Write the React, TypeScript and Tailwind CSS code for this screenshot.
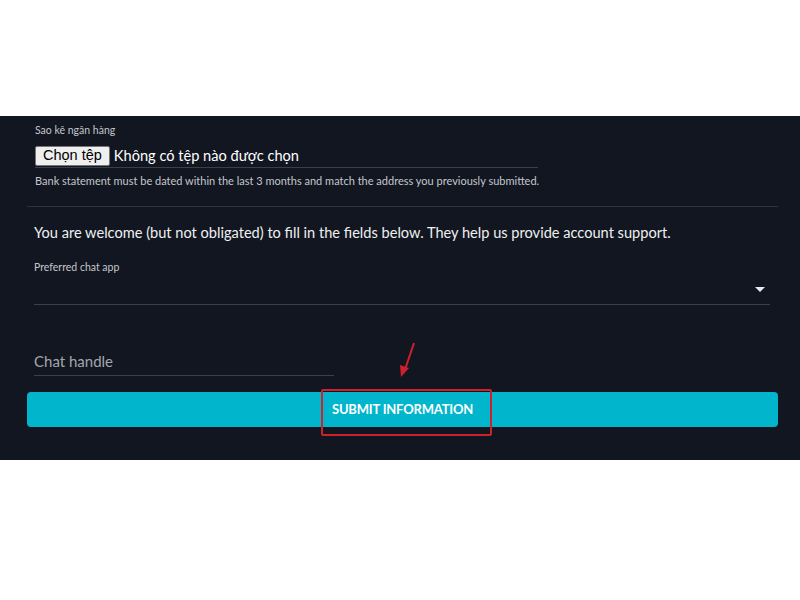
export default function App() {
  return (
    <div className="w-[800px] h-[600px] bg-white font-['Lato','Noto_Sans',sans-serif]">
      <div className="h-[116px]" />
      <div className="relative h-[344px] bg-[#121620] pl-[27px] pr-[22px] pt-[8px]">
        <div className="pl-[8px] w-[511px]">
          <div className="text-[10.5px] leading-[12px] text-[#c4c7cd]">Sao kê ngân hàng</div>
          <div className="mt-[9px] flex items-center gap-[4px] border-b border-[#3a3f49]">
            <span className="px-[7px] h-[20px] flex items-center bg-[#efefef] border border-[#767676] rounded-[2px] text-[14.5px] text-black font-['Liberation_Sans',sans-serif]">
              Chọn tệp
            </span>
            <span className="text-[14.6px] text-white">Không có tệp nào được chọn</span>
          </div>
          <div className="mt-[7px] text-[11px] leading-[12px] text-[#c4c7cd] whitespace-nowrap">
            Bank statement must be dated within the last 3 months and match the address you previously submitted.
          </div>
        </div>
        <div className="mt-[19px] border-t border-[#2e333d]" />
        <div className="pl-[7px] mt-[16px] text-[14.6px] leading-[20px] text-[#eef0f2] whitespace-nowrap">
          You are welcome (but not obligated) to fill in the fields below. They help us provide account support.
        </div>
        <div className="pl-[7px] mt-[18px] text-[10.5px] leading-[12px] text-[#c4c7cd]">Preferred chat app</div>
        <div className="ml-[7px] mr-[8px] mt-[4px] h-[28px] border-b border-[#3a3f49] flex justify-end items-center pr-[5px]">
          <svg width="10" height="6" viewBox="0 0 10 6">
            <path d="M0 0h10L5 5z" fill="#e8eaec" />
          </svg>
        </div>
        <div className="ml-[7px] mt-[47px] w-[300px] border-b border-[#3a3f49] pb-[5px] text-[15px] leading-[18px] text-[#a3a7ae]">
          Chat handle
        </div>
        <div className="mt-[16px] h-[35px] rounded-[4px] bg-[#00b5cc] flex items-center justify-center text-[13px] font-bold text-white tracking-[-0.2px]">
          SUBMIT INFORMATION
        </div>
        <div className="absolute left-[321px] top-[273px] w-[171px] h-[47px] border-2 border-[#d0202b] rounded-[2px]" />
        <svg className="absolute left-[395px] top-[225px]" width="30" height="40" viewBox="0 0 30 40">
          <path d="M19 2L9.5 30" stroke="#d0202b" strokeWidth="2" fill="none" />
          <path d="M5 24L6 36L14 27z" fill="#d0202b" />
        </svg>
      </div>
    </div>
  );
}
